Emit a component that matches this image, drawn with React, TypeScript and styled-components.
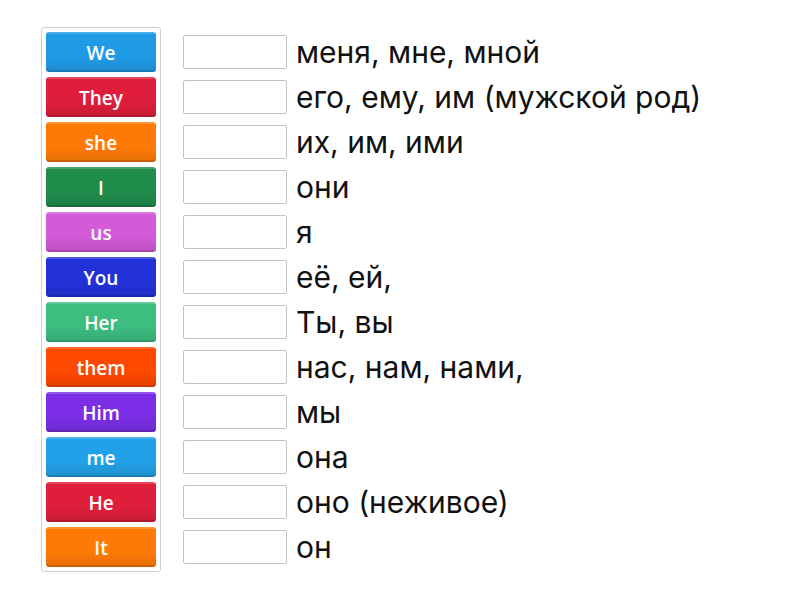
import styled, { createGlobalStyle } from 'styled-components';

const GlobalStyle = createGlobalStyle`
  html, body {
    margin: 0;
    padding: 0;
    background: #fff;
  }
`;

type Tile = { label: string; color: string };

const tiles: Tile[] = [
  { label: 'We', color: '#1f9be6' },
  { label: 'They', color: '#df1e3b' },
  { label: 'she', color: '#ff7a05' },
  { label: 'I', color: '#208c4b' },
  { label: 'us', color: '#d45ad9' },
  { label: 'You', color: '#2232d8' },
  { label: 'Her', color: '#3dbd80' },
  { label: 'them', color: '#ff4900' },
  { label: 'Him', color: '#7b2ee6' },
  { label: 'me', color: '#22a1e8' },
  { label: 'He', color: '#df1e3b' },
  { label: 'It', color: '#ff7a05' },
];

const answers = [
  'меня, мне, мной',
  'его, ему, им (мужской род)',
  'их, им, ими',
  'они',
  'я',
  'её, ей,',
  'Ты, вы',
  'нас, нам, нами,',
  'мы',
  'она',
  'оно (неживое)',
  'он',
];

export default function App() {
  return (
    <>
      <GlobalStyle />
      <Page>
        <Pool>
          {tiles.map((t) => (
            <Chip key={t.label} $color={t.color}>
              {t.label}
            </Chip>
          ))}
        </Pool>
        <Targets>
          {answers.map((a) => (
            <Row key={a}>
              <Slot />
              <Answer>{a}</Answer>
            </Row>
          ))}
        </Targets>
      </Page>
    </>
  );
}

const Page = styled.div`
  display: flex;
  align-items: flex-start;
  gap: 22px;
  padding: 27px 0 0 41px;
`;

const Pool = styled.div`
  display: flex;
  flex-direction: column;
  gap: 5px;
  width: 110px;
  padding: 4px;
  border: 1px solid #cfcfcf;
  border-radius: 3px;
  background: #fff;
`;

const Chip = styled.div<{ $color: string }>`
  height: 40px;
  box-sizing: border-box;
  padding-top: 2px;
  display: flex;
  align-items: center;
  justify-content: center;
  border-radius: 3px;
  background: linear-gradient(
      to bottom,
      rgba(255, 255, 255, 0.18) 0,
      rgba(255, 255, 255, 0.18) 2px,
      rgba(255, 255, 255, 0) 2px,
      rgba(0, 0, 0, 0) 60%,
      rgba(0, 0, 0, 0.1) 100%
    ),
    ${(p) => p.$color};
  box-shadow: inset 0 -2px 0 rgba(0, 0, 0, 0.12);
  color: #fff;
  font-family: 'Open Sans', Lato, sans-serif;
  font-size: 19px;
  font-weight: 600;
`;

const Targets = styled.div`
  display: flex;
  flex-direction: column;
  gap: 5px;
  padding-top: 5px;
`;

const Row = styled.div`
  height: 40px;
  display: flex;
  align-items: center;
  gap: 9px;
`;

const Slot = styled.div`
  flex: none;
  width: 102px;
  height: 32px;
  border: 1px solid #c4c4c4;
  border-radius: 2px;
  background: #fff;
`;

const Answer = styled.span`
  font-family: Inter, Roboto, sans-serif;
  font-size: 30px;
  font-weight: 400;
  line-height: 40px;
  color: #111;
  white-space: nowrap;
`;
